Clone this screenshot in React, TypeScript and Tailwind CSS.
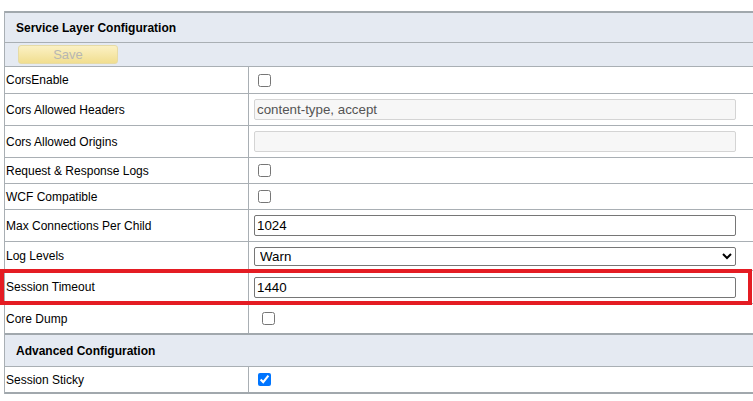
import React from "react";

const LINE = "border-[#a9afb4]";
const LABEL = "w-[244px] h-full shrink-0 flex items-center pl-[1px] border-r border-[#a9afb4] text-black";
const INPUT =
  "w-[482px] h-[21px] px-[2px] border border-[#767676] rounded-[2px] bg-white text-[13.33px] text-black outline-none";
const INPUT_OFF =
  "w-[482px] h-[21px] px-[2px] border border-[#d4d4d4] rounded-[2px] bg-[#f7f7f7] text-[13.33px] text-[#545454] outline-none";

function Row({
  label,
  h,
  last,
  children,
}: {
  label: string;
  h: string;
  last?: string;
  children?: React.ReactNode;
}) {
  return (
    <div className={`flex items-center ${h} ${last ?? "border-b"} ${LINE}`}>
      <div className={LABEL}>{label}</div>
      <div className="flex items-center pl-[5px]">{children}</div>
    </div>
  );
}

function Check({ checked, offset }: { checked?: boolean; offset?: string }) {
  return (
    <input
      type="checkbox"
      defaultChecked={checked}
      className={`w-[13px] h-[13px] m-0 ${offset ?? "ml-[4px]"}`}
    />
  );
}

function SectionHeader({ title, h }: { title: string; h: string }) {
  return (
    <div className={`${h} flex items-center pl-[11px] bg-[#e5eaf2] border-t-2 border-b border-t-[#a1a8ad] ${LINE}`}>
      <span className="font-bold text-[12px] text-black">{title}</span>
    </div>
  );
}

export default function App() {
  return (
    <div className="relative w-[753px] h-[401px] bg-white overflow-hidden font-['Liberation_Sans',Arial,sans-serif] text-[12px]">
      <div className="pt-[11px] pl-[4px]">
        <div className="w-[780px] border-l border-[#a9afb4]">
          <SectionHeader title="Service Layer Configuration" h="h-[32px]" />
          <div className={`h-[24px] flex items-center pl-[13px] bg-[#e5eaf2] border-b ${LINE}`}>
            <button
              type="button"
              disabled
              className="w-[100px] h-[19px] rounded-[3px] border border-[#e6dba6] bg-gradient-to-b from-[#fbf1c4] to-[#f1de8f] text-[13px] text-[#b7b7b2] leading-none"
            >
              Save
            </button>
          </div>
          <Row label="CorsEnable" h="h-[27px]">
            <Check />
          </Row>
          <Row label="Cors Allowed Headers" h="h-[32px]">
            <input className={INPUT_OFF} readOnly value="content-type, accept" />
          </Row>
          <Row label="Cors Allowed Origins" h="h-[32px]">
            <input className={INPUT_OFF} readOnly value="" />
          </Row>
          <Row label="Request & Response Logs" h="h-[26px]">
            <Check />
          </Row>
          <Row label="WCF Compatible" h="h-[26px]">
            <Check />
          </Row>
          <Row label="Max Connections Per Child" h="h-[32px]">
            <input className={INPUT} defaultValue="1024" />
          </Row>
          <Row label="Log Levels" h="h-[29px]">
            <select
              defaultValue="Warn"
              className="w-[482px] h-[19px] pl-[1px] border border-[#767676] rounded-[2px] bg-white text-[13.33px] text-black outline-none"
            >
              <option>Debug</option>
              <option>Info</option>
              <option>Warn</option>
              <option>Error</option>
            </select>
          </Row>
          <Row label="Session Timeout" h="h-[33px]">
            <input className={INPUT} defaultValue="1440" />
          </Row>
          <Row label="Core Dump" h="h-[29px]" last="">
            <Check offset="ml-[8px]" />
          </Row>
          <SectionHeader title="Advanced Configuration" h="h-[34px]" />
          <Row label="Session Sticky" h="h-[27px]" last="border-b-2 border-b-[#a1a8ad]">
            <Check checked />
          </Row>
        </div>
      </div>
      <div className="absolute left-0 top-[269px] w-[752px] h-[36px] border-4 border-[#e41c23] pointer-events-none" />
    </div>
  );
}
